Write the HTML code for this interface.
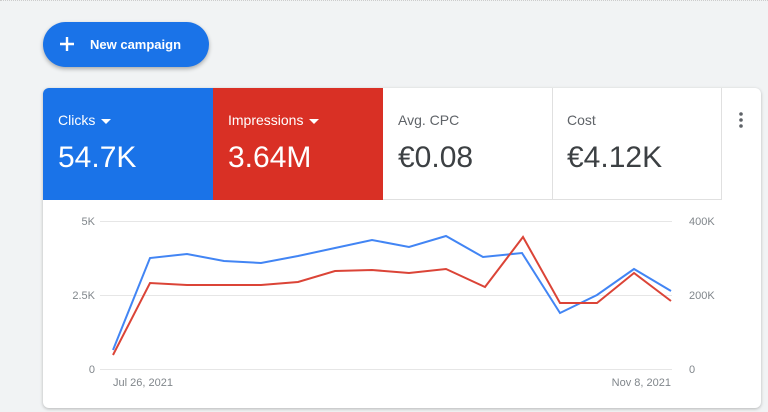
<!DOCTYPE html><html><head><style>
body{margin:0;width:768px;height:412px;background:#f1f3f4;font-family:"Liberation Sans",sans-serif;overflow:hidden;position:relative}
.top{position:absolute;left:0;top:0;width:768px;height:1px;border-top:1px dotted #ccc}
.btn{position:absolute;left:43px;top:22px;width:166px;height:45px;border-radius:23px;background:#1a73e8;box-shadow:0 2px 4px rgba(0,0,0,.3);color:#fff;font-weight:bold;font-size:13px}
.btn span{position:absolute;left:47px;top:15px}
.card{position:absolute;left:43px;top:88px;width:718px;height:320px;background:#fff;border-radius:6px;box-shadow:0 1px 3px rgba(0,0,0,.25);overflow:hidden}
.t{position:absolute;top:0;height:112px;width:170px;box-sizing:border-box;padding:24px 15px}
.t .l{font-size:14px}.t .v{font-size:30px;margin-top:13px}
.car{display:inline-block;width:0;height:0;border-left:5px solid transparent;border-right:5px solid transparent;border-top:5px solid #fff;margin-left:6px;vertical-align:middle}
.c{border-right:1px solid #e0e0e0;border-bottom:1px solid #e0e0e0;color:#3c4043}
.c .l{color:#5f6368}
.ax{font-size:11px;fill:#80868b;font-family:"Liberation Sans",sans-serif}
</style></head><body>
<div class="top"></div>
<div class="btn"><svg style="position:absolute;left:16px;top:14px" width="16" height="16"><path d="M8 1v14M1 8h14" stroke="#fff" stroke-width="2.4"/></svg><span>New campaign</span></div>
<div class="card">
<div class="t" style="left:0;background:#1a73e8;color:#fff"><div class="l">Clicks<span class="car"></span></div><div class="v">54.7K</div></div>
<div class="t" style="left:170px;background:#d93025;color:#fff"><div class="l">Impressions<span class="car"></span></div><div class="v">3.64M</div></div>
<div class="t c" style="left:340px"><div class="l">Avg. CPC</div><div class="v">€0.08</div></div>
<div class="t c" style="left:509px"><div class="l">Cost</div><div class="v">€4.12K</div></div>
<svg style="position:absolute;left:694px;top:24px" width="8" height="16"><circle cx="4" cy="2" r="1.8" fill="#5f6368"/><circle cx="4" cy="8" r="1.8" fill="#5f6368"/><circle cx="4" cy="14" r="1.8" fill="#5f6368"/></svg>
</div>
<svg style="position:absolute;left:0;top:0" width="768" height="412">
<g stroke="#e6e6e6" stroke-width="1"><line x1="100" y1="221.5" x2="672" y2="221.5"/><line x1="100" y1="295.5" x2="672" y2="295.5"/><line x1="100" y1="369.5" x2="672" y2="369.5"/></g>
<text class="ax" x="95" y="225" text-anchor="end">5K</text><text class="ax" x="95" y="299" text-anchor="end">2.5K</text><text class="ax" x="95" y="373" text-anchor="end">0</text>
<text class="ax" x="689" y="225">400K</text><text class="ax" x="689" y="299">200K</text><text class="ax" x="689" y="373">0</text>
<text class="ax" x="113" y="386">Jul 26, 2021</text><text class="ax" x="671" y="386" text-anchor="end">Nov 8, 2021</text>
<polyline fill="none" stroke="#4285f4" stroke-width="2" points="113,350 150,258 187,254 224,261 261,263 298,256 335,248 372,240 409,247 446,236 483,257 522,253 560,313 597,295 634,269 671,291"/>
<polyline fill="none" stroke="#db4437" stroke-width="2" points="113,355 150,283 187,285 224,285 261,285 298,282 335,271 372,270 409,273 446,269 485,287 523,237 560,303 597,303 634,273 671,301"/>
</svg>
</body></html>
